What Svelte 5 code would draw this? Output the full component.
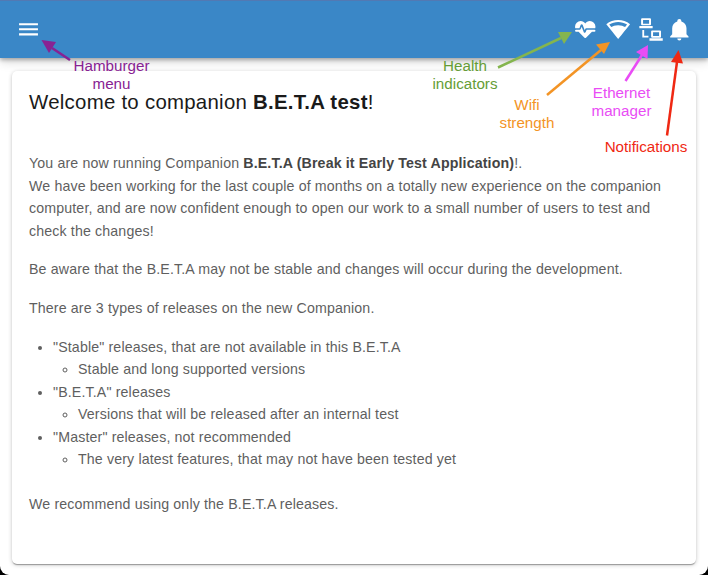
<script>
  const icons = [
    { name: 'Health', dx: 0, d: 'M7.5,4A5.5,5.5 0 0,0 2,9.5C2,10 2.09,10.5 2.22,11H6.3L7.57,7.63C7.87,6.83 9.05,6.75 9.43,7.63L11.5,13L12.09,11.58C12.22,11.25 12.57,11 13,11H21.78C21.91,10.5 22,10 22,9.5A5.5,5.5 0 0,0 16.5,4C14.64,4 13,4.93 12,6.34C11,4.93 9.36,4 7.5,4V4M3,12.5A1,1 0 0,0 2,13.5A1,1 0 0,0 3,14.5H5.44L11,20C12,20.9 12,20.9 13,20L18.56,14.5H21A1,1 0 0,0 22,13.5A1,1 0 0,0 21,12.5H13.4L12.47,14.8C12.07,15.81 10.92,15.67 10.55,14.83L8.5,9.5L7.54,11.83C7.39,12.21 7.05,12.5 6.6,12.5H3Z' },
    { name: 'Wifi', dx: 0.9, d: 'M12,3C7.79,3 3.7,4.41 0.38,7C4.41,12.06 7.89,16.37 12,21.5C16.08,16.42 20.24,11.24 23.65,7C20.32,4.41 16.22,3 12,3M12,5C15.07,5 18.09,5.86 20.71,7.45L18.77,9.88C17.26,9 14.88,8 12,8C9,8 6.68,9 5.21,9.84L3.27,7.44C5.91,5.85 8.93,5 12,5Z' },
    { name: 'Ethernet', dx: 0, d: 'M6,1.3H13.7A1,1 0 0,1 14.7,2.3V7.2A1,1 0 0,1 13.7,8.2H6A1,1 0 0,1 5,7.2V2.3A1,1 0 0,1 6,1.3M6.9,3V6.6H12.8V3ZM3.3,8.7H16.3V10.9H3.3ZM6.2,12.7H8V18.3H12.2V20.1H6.2ZM15.8,13.2H23.5A1,1 0 0,1 24.5,14.2V19.3A1,1 0 0,1 23.5,20.3H15.8A1,1 0 0,1 14.8,19.3V14.2A1,1 0 0,1 15.8,13.2M16.7,15V18.7H22.6V15ZM13.2,20.9H26.2V23.3H13.2Z' },
    { name: 'Notifications', dx: -0.9, d: 'M21,19V20H3V19L5,17V11C5,7.9 7.03,5.17 10,4.29C10,4.19 10,4.1 10,4A2,2 0 0,1 12,2A2,2 0 0,1 14,4C14,4.1 14,4.19 14,4.29C16.97,5.17 19,7.9 19,11V17L21,19M14,21A2,2 0 0,1 12,23A2,2 0 0,1 10,21' }
  ];
  const arrows = [
    { c: '#882293', line: 'M70 60L52 48', head: '41.5,40 56,42 49,53' },
    { c: '#84b54e', line: 'M498 67.500L561 38', head: '572,32 558,32 564,44' },
    { c: '#f39425', line: 'M547 95L601 50', head: '610,42 596,44.500 604,54' },
    { c: '#e94cf5', line: 'M625.500 81L642 55', head: '648,45 636,52 647.500,59' },
    { c: '#ef2813', line: 'M667 135.500L677 62', head: '678.500,50 671,62 683,63.500' }
  ];
</script>

<div class="window">
  <header>
    <svg class="icon" viewBox="0 0 24 24" role="img" aria-label="Menu"><path d="M3,6H21.5V8H3V6M3,11H21.5V13H3V11M3,16H21.5V18H3V16Z" /></svg>
    <nav>
      {#each icons as icon}
        <svg class="icon" viewBox="{-icon.dx} 0 24 24" role="img" aria-label={icon.name}><path fill-rule="evenodd" d={icon.d} /></svg>
      {/each}
    </nav>
  </header>
  <main>
    <h1>Welcome to companion <b>B.E.T.A test</b>!</h1>
    <p>You are now running Companion <b>B.E.T.A (Break it Early Test Application)</b>!.<br />We have been working for the last couple of months on a totally new experience on the companion<br />computer, and are now confident enough to open our work to a small number of users to test and<br />check the changes!</p>
    <p>Be aware that the B.E.T.A may not be stable and changes will occur during the development.</p>
    <p>There are 3 types of releases on the new Companion.</p>
    <ul>
      <li>"Stable" releases, that are not available in this B.E.T.A
        <ul><li>Stable and long supported versions</li></ul>
      </li>
      <li>"B.E.T.A" releases
        <ul><li>Versions that will be released after an internal test</li></ul>
      </li>
      <li>"Master" releases, not recommended
        <ul><li>The very latest features, that may not have been tested yet</li></ul>
      </li>
    </ul>
    <p>We recommend using only the B.E.T.A releases.</p>
  </main>

  <svg class="arrows" viewBox="0 0 708 575" aria-hidden="true">
    {#each arrows as a}
      <path d={a.line} stroke={a.c} stroke-width="2.5" />
      <polygon points={a.head} fill={a.c} />
    {/each}
  </svg>
  <span class="note menu">Hamburger<br />menu</span>
  <span class="note health">Health<br />indicators</span>
  <span class="note wifi">Wifi<br />strength</span>
  <span class="note ethernet">Ethernet<br />manager</span>
  <span class="note bell">Notifications</span>
</div>

<style>
  :global(body) { background: #000; }
  .window {
    position: relative;
    box-sizing: border-box;
    width: 708px;
    height: 575px;
    overflow: hidden;
    background: #fff;
    border-radius: 0 0 9px 9px;
    font-family: "Liberation Sans", Arial, sans-serif;
    display: flex;
    flex-direction: column;
  }
  header {
    flex: none;
    box-sizing: border-box;
    height: 58px;
    padding: 0 16px 1px;
    background: #3a87c7;
    border-top: 1px solid #5279b3;
    box-shadow: 0 2px 4px rgba(0, 0, 0, .28), 0 4px 10px rgba(0, 0, 0, .14);
    display: flex;
    align-items: center;
    justify-content: space-between;
  }
  nav { display: flex; gap: 7px; }
  .icon { display: block; width: 24.5px; height: 24.5px; fill: #fff; overflow: visible; }
  main {
    flex: none;
    box-sizing: border-box;
    width: 684px;
    height: 493px;
    margin: 13px 0 0 12px;
    padding: 16px 17px;
    background: #fff;
    border-radius: 5px;
    box-shadow: 0 2px 1px -1px rgba(0, 0, 0, .2), 0 1px 1px rgba(0, 0, 0, .14), 0 1px 4px rgba(0, 0, 0, .22);
    color: #5f5f5f;
    font-size: 14.2px;
    line-height: 22.5px;
    letter-spacing: .14px;
    white-space: nowrap;
  }
  h1 {
    margin: 0 0 34px;
    color: #1a1a1a;
    font-size: 20.4px;
    line-height: 31px;
    font-weight: 400;
    letter-spacing: .27px;
  }
  p { margin: 0 0 16.3px; }
  b { font-weight: 700; }
  p b { color: #444; }
  ul { margin: 0 0 22px; padding-left: 24px; }
  ul ul { margin: 0; padding-left: 25px; }
  .arrows { position: absolute; inset: 0; width: 708px; height: 575px; }
  .note {
    position: absolute;
    transform: translateX(-50%);
    font-size: 15.2px;
    line-height: 17.5px;
    text-align: center;
    white-space: nowrap;
  }
  .menu { left: 111.5px; top: 57px; color: #882293; }
  .health { left: 465px; top: 57px; color: #659d36; }
  .wifi { left: 527px; top: 96px; color: #f39425; }
  .ethernet { left: 621.5px; top: 84px; color: #e94cf5; }
  .bell { left: 646px; top: 138px; color: #ef2813; }
</style>
